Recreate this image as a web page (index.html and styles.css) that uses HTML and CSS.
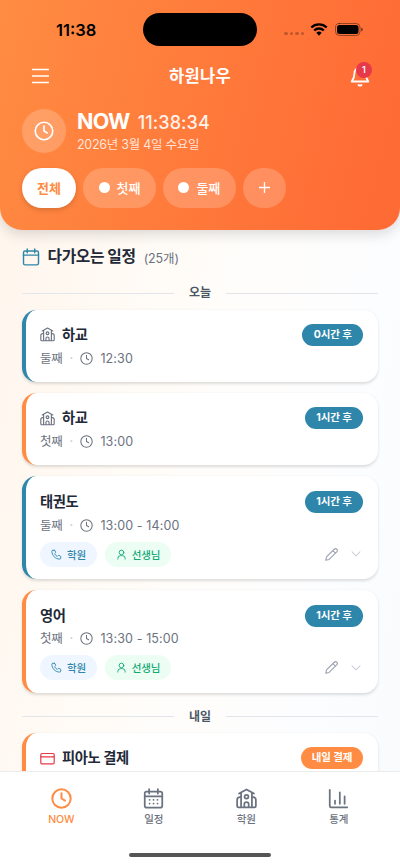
FILE: index.html
```html
<!DOCTYPE html>
<html lang="ko">
<head>
<meta charset="utf-8">
<meta name="viewport" content="width=device-width, initial-scale=1">
<title>하원나우</title>
<link rel="stylesheet" href="styles.css">
</head>
<body>
<svg class="sprite" aria-hidden="true">
  <symbol id="clock" viewBox="0 0 24 24"><circle cx="12" cy="12" r="10.5"/><path d="M12 6V12l4 2.300"/></symbol>
  <symbol id="calendar" viewBox="0 0 24 24"><rect x="2" y="4" width="20" height="18.500" rx="2.200"/><path d="M2 9.500h20M7 1.300v5M17 1.300v5"/></symbol>
  <symbol id="school" viewBox="0 0 24 24"><path d="M3.500 6.300 12 1.700l8.500 4.600M5.800 5.300V22M18.200 5.300V22M5.800 10.500H4.500A3.200 3.200 0 0 0 1.300 13.700V20.500A1.500 1.500 0 0 0 2.800 22H21.200A1.500 1.500 0 0 0 22.700 20.500V13.700A3.200 3.200 0 0 0 19.500 10.500H18.200M9.500 22V18.500A2.500 2.500 0 0 1 14.500 18.500V22"/><circle cx="12" cy="10" r="2.200"/></symbol>
  <symbol id="phone" viewBox="0 0 24 24"><path d="M7.200 2.800H4A2 2 0 0 0 2 5c0 9.400 7.600 17 17 17a2.200 2.200 0 0 0 2.200-2v-3.200a2 2 0 0 0-1.500-1.900l-2.700-.8a2 2 0 0 0-2 .5l-1.400 1.500a14 14 0 0 1-5.700-5.700l1.500-1.400a2 2 0 0 0 .5-2l-.8-2.700a2 2 0 0 0-1.900-1.500z"/></symbol>
  <symbol id="person" viewBox="0 0 24 24"><circle cx="12" cy="7.500" r="5"/><path d="M4 22v-1.500a6 6 0 0 1 6-6h4a6 6 0 0 1 6 6V22"/></symbol>
  <symbol id="pencil" viewBox="0 0 24 24"><path d="M2.800 16.500 1.300 22.700l6.200-1.500L21.700 7a3.300 3.300 0 0 0-4.700-4.700zM14.500 4.800l4.700 4.700"/></symbol>
  <symbol id="chevron" viewBox="0 0 24 24"><path d="m2.500 7 9.500 9.500L21.500 7"/></symbol>
  <symbol id="card" viewBox="0 0 24 24"><rect x="1.300" y="4" width="21.400" height="16.500" rx="1.800"/><path d="M1.300 9.500h21.400"/></symbol>
</svg>
<div class="app">
  <header class="hero">
    <div class="status">
      <span class="status-time">11:38</span>
      <span class="island"></span>
      <div class="status-icons">
        <span class="signal"><i></i><i></i><i></i><i></i></span>
        <svg class="wifi" viewBox="0 0 18 13"><path d="M1.300 4.500a11 11 0 0 1 15.400 0M4.200 7.500a6.900 6.900 0 0 1 9.600 0"/><path class="solid" d="M6.300 9.700a4 4 0 0 1 5.400 0L9 12.700z"/></svg>
        <svg class="battery" viewBox="0 0 28 13"><rect class="shell" x=".5" y=".5" width="24.500" height="12" rx="3.800"/><rect x="2" y="2" width="21.500" height="9" rx="2.500"/><path class="tip" d="M26 4.500q2 .5 2 2t-2 2z"/></svg>
      </div>
    </div>
    <div class="nav">
      <svg class="menu" viewBox="0 0 17 16"><path d="M0 1.500h17M0 8h17M0 14.500h17"/></svg>
      <h1>하원나우</h1>
      <div class="alerts">
        <svg class="bell" viewBox="0 0 20 22"><path d="M10 2.500a5.500 5.500 0 0 0-5.500 5.500c0 4.500-1 6-2.800 8.500h16.600C16.500 14 15.500 12.500 15.500 8A5.500 5.500 0 0 0 10 2.500zM8.500 20q1.500 1.300 3 0"/></svg>
        <span class="count">1</span>
      </div>
    </div>
    <div class="now">
      <span class="now-icon"><svg class="icon"><use href="#clock"/></svg></span>
      <div>
        <div class="now-line"><strong>NOW</strong><span>11:38:34</span></div>
        <div class="date">2026년 3월 4일 수요일</div>
      </div>
    </div>
    <div class="filters">
      <span class="filter active">전체</span>
      <span class="filter child"><i></i>첫째</span>
      <span class="filter child"><i></i>둘째</span>
      <span class="filter add"><svg viewBox="0 0 11 11"><path d="M5.500 0v11M0 5.500h11"/></svg></span>
    </div>
  </header>
  <main class="content">
    <div class="heading"><svg class="icon"><use href="#calendar"/></svg><h2>다가오는 일정</h2><span>(25개)</span></div>
    <div class="day">오늘</div>
    <article class="event blue">
      <div class="top"><svg class="icon school"><use href="#school"/></svg><h3>하교</h3><span class="pill">0시간 후</span></div>
      <div class="meta"><span>둘째</span><b>·</b><svg class="icon"><use href="#clock"/></svg><time>12:30</time></div>
    </article>
    <article class="event orange">
      <div class="top"><svg class="icon school"><use href="#school"/></svg><h3>하교</h3><span class="pill">1시간 후</span></div>
      <div class="meta"><span>첫째</span><b>·</b><svg class="icon"><use href="#clock"/></svg><time>13:00</time></div>
    </article>
    <article class="event blue tall">
      <div class="top"><h3>태권도</h3><span class="pill">1시간 후</span></div>
      <div class="meta"><span>둘째</span><b>·</b><svg class="icon"><use href="#clock"/></svg><time>13:00 - 14:00</time></div>
      <div class="actions"><span class="chip academy"><svg class="icon"><use href="#phone"/></svg>학원</span><span class="chip teacher"><svg class="icon"><use href="#person"/></svg>선생님</span><svg class="icon edit"><use href="#pencil"/></svg><svg class="icon more"><use href="#chevron"/></svg></div>
    </article>
    <article class="event orange tall">
      <div class="top"><h3>영어</h3><span class="pill">1시간 후</span></div>
      <div class="meta"><span>첫째</span><b>·</b><svg class="icon"><use href="#clock"/></svg><time>13:30 - 15:00</time></div>
      <div class="actions"><span class="chip academy"><svg class="icon"><use href="#phone"/></svg>학원</span><span class="chip teacher"><svg class="icon"><use href="#person"/></svg>선생님</span><svg class="icon edit"><use href="#pencil"/></svg><svg class="icon more"><use href="#chevron"/></svg></div>
    </article>
    <div class="day">내일</div>
    <article class="event orange">
      <div class="top"><svg class="icon pay"><use href="#card"/></svg><h3>피아노 결제</h3><span class="pill due">내일 결제</span></div>
    </article>
  </main>
  <footer class="bottom">
    <nav class="tabs">
      <div class="tab current"><svg class="icon"><use href="#clock"/></svg>NOW</div>
      <div class="tab"><svg class="icon" viewBox="0 0 24 24"><use href="#calendar" width="24" height="24"/><path d="M7.500 13.500h.1M12 13.500h.1M16.500 13.500h.1M7.500 17.800h.1M12 17.800h.1M16.500 17.800h.1"/></svg>일정</div>
      <div class="tab"><svg class="icon"><use href="#school"/></svg>학원</div>
      <div class="tab"><svg class="icon" viewBox="0 0 24 24"><path d="M2 2v18.500A1.500 1.500 0 0 0 3.500 22H22M8 14.500V18M13.500 5v13M19 9.500V18"/></svg>통계</div>
    </nav>
    <div class="home"></div>
  </footer>
</div>
</body>
</html>
```
FILE: styles.css
```css
* { box-sizing: border-box; }
body { margin: 0; font-family: Inter, "Noto Sans CJK KR", sans-serif; color: #1f2937; }
h1, h2, h3 { margin: 0; }
svg { display: block; flex: none; fill: none; stroke: currentColor; stroke-linecap: round; stroke-linejoin: round; }
.sprite { display: none; }
.icon { width: 16px; height: 16px; stroke-width: 1.8; }
.app { width: 400px; height: 865px; overflow: hidden; display: flex; flex-direction: column; background: linear-gradient(100deg, #fff5eb 0%, #fffdfa 50%, #fcfdff 80%, #f8fafc 100%); }

.hero { flex: none; height: 230px; padding: 0 22px; border-radius: 0 0 22px 22px; background: linear-gradient(105deg, #ff8c42, #ff6b35 92%); box-shadow: 0 4px 14px rgba(0,0,0,.15); color: #fff; }
.status { height: 58px; display: grid; grid-template-columns: 121px 114px 1fr; align-items: center; }
.status-time { padding: 1px 0 0 34px; color: #000; font-size: 16.500px; font-weight: 600; letter-spacing: 0; }
.island { height: 33px; border-radius: 17px; background: #000; }
.status-icons { display: flex; align-items: center; padding-left: 27px; color: #000; }
.signal { display: flex; gap: 2px; padding-top: 9px; margin-right: 6px; }
.signal i { width: 3.500px; height: 3.500px; border-radius: 50%; background: #000; opacity: .25; }
.wifi { width: 18px; height: 13px; stroke-width: 2.400; stroke-linecap: butt; margin-right: 6.500px; }
.wifi .solid { fill: #000; stroke: none; }
.battery { width: 28px; height: 13px; fill: #000; stroke: none; }
.battery .shell { fill: none; stroke: #000; opacity: .4; }
.battery .tip { opacity: .45; }
.nav { height: 36px; display: flex; align-items: center; justify-content: space-between; padding: 0 8px 0 10px; }
.menu { width: 17px; height: 16px; stroke-width: 1.700; stroke-linecap: butt; }
.nav h1 { font-size: 16.500px; line-height: 24px; font-weight: 700; letter-spacing: .3px; margin-left: 1px; }
.alerts { position: relative; width: 20px; height: 22px; }
.bell { width: 20px; height: 22px; stroke-width: 1.800; }
.count { position: absolute; left: 6px; top: -3px; width: 16px; height: 16px; border-radius: 50%; background: #e6394a; font-size: 9px; line-height: 16px; font-weight: 600; text-align: center; }
.now { height: 74px; display: flex; align-items: center; gap: 11px; }
.now-icon { width: 44px; height: 44px; border-radius: 50%; background: rgba(255,255,255,.2); display: grid; place-items: center; }
.now-icon .icon { width: 20px; height: 20px; stroke-width: 2; }
.now-line { height: 26px; display: flex; align-items: baseline; gap: 8px; line-height: 26px; }
.now-line strong { font-size: 21.500px; letter-spacing: -.7px; }
.now-line span { font-size: 18px; font-weight: 500; letter-spacing: .08px; opacity: .9; }
.date { padding-top: 1.500px; font-size: 12.500px; line-height: 19px; letter-spacing: -.27px; color: rgba(255,255,255,.8); }
.filters { display: flex; gap: 7.300px; }
.filter { height: 40px; padding-bottom: 1px; border-radius: 20px; display: flex; align-items: center; justify-content: center; background: rgba(255,255,255,.2); font-size: 13px; font-weight: 500; }
.filter.active { width: 54px; background: #fff; color: #ff8c42; font-weight: 700; box-shadow: 0 2px 5px rgba(0,0,0,.16); }
.filter.child { width: 72.500px; gap: 7px; }
.filter i { width: 11px; height: 11px; border-radius: 50%; background: #fff; }
.filter.add { width: 43.500px; }
.add svg { width: 11px; height: 11px; stroke-width: 1.300; }

.content { flex: 1; min-height: 0; overflow: hidden; padding: 14px 22px 0; }
.heading { height: 26px; display: flex; align-items: center; }
.heading .icon { width: 18px; height: 18px; color: #2e86ab; stroke-width: 1.900; }
.heading h2 { margin-left: 7.500px; font-size: 15.800px; line-height: 24px; letter-spacing: -.4px; }
.heading span { margin-left: 8px; font-size: 12.500px; letter-spacing: -.1px; color: #6b7280; }
.day { height: 20px; display: flex; align-items: center; gap: 15px; margin-top: 13.300px; margin-bottom: 6.300px; font-size: 12px; font-weight: 600; line-height: 20px; letter-spacing: -.1px; color: #4b5563; }
.day::before, .day::after { content: ""; flex: 1; height: 1.500px; background: #e2e5ea; }
.event { padding: 14.400px 15px 0 14px; height: 72.500px; margin-bottom: 10.900px; border: 0 solid; border-left-width: 4px; border-radius: 14.500px; background: #fff; box-shadow: 0 1.500px 3px rgba(0,0,0,.13); }
.event.tall { height: 103px; }
.blue { border-left-color: #2e86ab; }
.orange { border-left-color: #ff8c42; }
.top { height: 22px; display: flex; align-items: center; }
.top .icon { width: 15px; height: 15px; margin-right: 7px; }
.school { color: #6b7280; stroke-width: 1.800; }
.pay { color: #e6394a; stroke-width: 1.900; }
.top h3 { font-size: 14.300px; line-height: 22px; letter-spacing: -.4px; }
.pill { margin-left: auto; height: 22px; padding: 0 11.300px; border-radius: 11px; background: #2e86ab; color: #fff; font-size: 10.500px; line-height: 22px; letter-spacing: -.1px; font-weight: 700; }
.pill.due { padding: 0 10.700px; background: #ff8c42; }
.meta { height: 17px; margin-top: 3.800px; display: flex; align-items: center; line-height: 17px; color: #6b7280; font-size: 12.500px; }
.meta span { letter-spacing: -.3px; }
.meta time { letter-spacing: .12px; }
.meta b { width: 18px; text-align: center; color: #c6c9cf; font-size: 11px; }
.meta .icon { width: 13px; height: 13px; margin-right: 7px; stroke-width: 1.900; }
.actions { margin-top: 8px; height: 25px; display: flex; align-items: center; }
.chip { height: 25px; border-radius: 13px; padding: 0 11px; display: flex; align-items: center; gap: 5px; margin-right: 7.500px; font-size: 10.500px; letter-spacing: -.1px; font-weight: 500; }
.chip .icon { width: 11px; height: 11px; stroke-width: 2; }
.academy { background: #eff6ff; color: #2e86ab; }
.teacher { background: #ecfdf3; color: #12a974; }
.edit { width: 13px; height: 13px; margin-left: auto; color: #9ca3af; stroke-width: 2; }
.more { width: 10px; height: 10px; margin: 0 2px 0 13px; color: #cdd1d8; stroke-width: 2.800; }

.bottom { flex: none; height: 94px; border-top: 1.500px solid #ececef; background: #fff; }
.tabs { height: 67px; padding: 15.500px 15px 0; display: grid; grid-template-columns: repeat(4, 1fr); }
.tab { display: flex; flex-direction: column; align-items: center; gap: 3.500px; color: #6b7280; font-size: 10.500px; font-weight: 500; line-height: 16px; letter-spacing: -.1px; }
.tab .icon { width: 21px; height: 21px; stroke-width: 2; }
.tab.current { color: #ff8c42; }
.tab.current .icon { stroke-width: 2.300; }
.home { width: 142px; height: 4.500px; border-radius: 3px; background: #555; margin: 13.500px auto 0; }
```
